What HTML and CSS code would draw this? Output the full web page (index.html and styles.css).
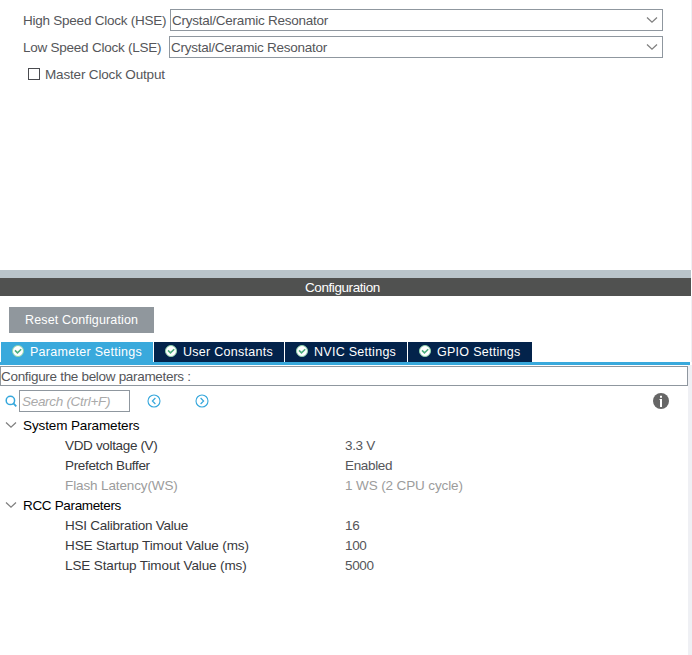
FILE: index.html
```html
<!DOCTYPE html>
<html lang="en">
<head>
<meta charset="utf-8">
<title>RCC Mode and Configuration</title>
<link rel="stylesheet" href="styles.css">
</head>
<body>
<svg class="defs" width="0" height="0">
  <symbol id="chevron" viewBox="0 0 12 8"><path d="M1 1.500 6 6.200 11 1.500" fill="none" stroke="#808080" stroke-width="1.300"/></symbol>
  <symbol id="check" viewBox="0 0 12 12"><circle cx="6" cy="6" r="5.500" fill="#fff" stroke="#8fd3ac" stroke-width="1"/><path d="M3 5.400 5.500 7.900 9.200 4.300" fill="none" stroke="#4caf7c" stroke-width="1.600"/></symbol>
</svg>
<section class="mode">
  <div class="field"><span class="label">High Speed Clock (HSE)</span><div class="select">Crystal/Ceramic Resonator<svg class="chev"><use href="#chevron"/></svg></div></div>
  <div class="field low"><span class="label">Low Speed Clock (LSE)</span><div class="select">Crystal/Ceramic Resonator<svg class="chev"><use href="#chevron"/></svg></div></div>
  <div class="option"><span class="box"></span>Master Clock Output</div>
</section>
<div class="splitter"></div>
<header class="title">Configuration</header>
<section class="tools">
  <div class="reset">Reset Configuration</div>
  <nav class="tabs">
    <div class="tab active"><svg class="ok"><use href="#check"/></svg>Parameter Settings</div>
    <div class="tab constants"><svg class="ok"><use href="#check"/></svg>User Constants</div>
    <div class="tab nvic"><svg class="ok"><use href="#check"/></svg>NVIC Settings</div>
    <div class="tab gpio"><svg class="ok"><use href="#check"/></svg>GPIO Settings</div>
  </nav>
</section>
<div class="line"></div>
<main class="panel">
  <div class="hint">Configure the below parameters :</div>
  <div class="searchbar">
    <svg class="magnifier" viewBox="0 0 12 12"><circle cx="5.400" cy="5.400" r="4.200" fill="none" stroke="#35a7dc" stroke-width="1.500"/><path d="M8.200 8.200 11.300 11.300" stroke="#35a7dc" stroke-width="1.800"/></svg>
    <div class="search">Search (Ctrl+F)</div>
    <svg class="nav prev" viewBox="0 0 14 14"><circle cx="7" cy="7" r="6" fill="none" stroke="#35a7dc" stroke-width="1.100"/><path d="M8.400 4 5.400 7 8.400 10" fill="none" stroke="#35a7dc" stroke-width="1.200"/></svg>
    <svg class="nav next" viewBox="0 0 14 14"><circle cx="7" cy="7" r="6" fill="none" stroke="#35a7dc" stroke-width="1.100"/><path d="M5.600 4 8.600 7 5.600 10" fill="none" stroke="#35a7dc" stroke-width="1.200"/></svg>
    <svg class="info" viewBox="0 0 16 16"><circle cx="8" cy="8" r="8" fill="#666"/><path d="M7 2.700h2v2H7zM6.500 6H9v8H7V7H6.500z" fill="#fff"/></svg>
  </div>
  <div class="tree">
    <div class="group wide"><svg class="chev"><use href="#chevron"/></svg>System Parameters</div>
    <div class="row narrow"><span>VDD voltage (V)</span><span class="value">3.3 V</span></div>
    <div class="row narrow"><span>Prefetch Buffer</span><span class="value">Enabled</span></div>
    <div class="row wide disabled"><span>Flash Latency(WS)</span><span class="value">1 WS (2 CPU cycle)</span></div>
    <div class="group narrow"><svg class="chev"><use href="#chevron"/></svg>RCC Parameters</div>
    <div class="row"><span>HSI Calibration Value</span><span class="value narrow">16</span></div>
    <div class="row wide"><span>HSE Startup Timout Value (ms)</span><span class="value narrow">100</span></div>
    <div class="row wide"><span>LSE Startup Timout Value (ms)</span><span class="value narrow">5000</span></div>
  </div>
</main>
</body>
</html>
```
FILE: styles.css
```css
* { box-sizing: border-box; }
body {
  margin: 0;
  height: 655px;
  display: flex;
  flex-direction: column;
  overflow: hidden;
  background: #fff;
  color: #55565a;
  font: 13.5px/20px "Liberation Sans", Arial, sans-serif;
  letter-spacing: -.24px;
  white-space: nowrap;
}
svg { display: block; flex: none; }
.defs { position: absolute; }
.wide { letter-spacing: -.12px; }
.narrow { letter-spacing: -.34px; }
.mode {
  height: 270px;
  padding: 9px 28px 0 23px;
  border-right: 1px solid #eff0f4;
}
.field { display: flex; height: 22px; margin-bottom: 5px; line-height: 23px; }
.label { width: 147px; }
.low .label { width: 146px; }
.select {
  flex: 1;
  display: flex;
  align-items: center;
  justify-content: space-between;
  border: 1px solid #8f979f;
  padding: 0 4px 0 1px;
}
.chev { width: 12px; height: 8px; }
.option {
  display: flex;
  align-items: center;
  height: 20px;
  margin: 6px 0 0 5px;
  line-height: 21px;
  letter-spacing: -.17px;
}
.box { width: 12px; height: 12px; border: 1px solid #4a4b4f; margin-right: 5px; }
.splitter { height: 8px; margin-right: 1px; background: #b9c4ca; }
.title {
  height: 18px;
  margin-right: 1px;
  padding-left: 305px;
  line-height: 19px;
  background: #505150;
  color: #fff;
  letter-spacing: -.42px;
}
.tools {
  height: 66px;
  padding-top: 11px;
  border-right: 1px solid #eff0f4;
  color: #fff;
  font-size: 12.5px;
  letter-spacing: .28px;
}
.reset {
  width: 145px;
  height: 26px;
  margin-left: 9px;
  padding-left: 16px;
  line-height: 27px;
  background: #90979d;
  letter-spacing: .14px;
}
.tabs { display: flex; gap: 1px; margin: 9px 0 0 1px; }
.tab {
  display: flex;
  align-items: center;
  height: 20px;
  padding-left: 11px;
  background: #03234b;
}
.ok { width: 12px; height: 12px; margin: -2px 6px 0 0; }
.active { width: 152px; background: #39a9dc; }
.constants { width: 130px; }
.nvic { width: 122px; }
.gpio { width: 124px; }
.line { height: 3px; margin-right: 2px; background: #39a9dc; }
.panel { flex: 1; padding-top: 1px; border-right: 4px solid #eff0f4; }
.hint { height: 20px; line-height: 20px; border: 1px solid #8f979f; letter-spacing: -.31px; }
.searchbar { display: flex; align-items: center; height: 29px; padding-left: 5px; }
.magnifier { width: 12px; height: 12px; }
.search {
  width: 111px;
  height: 22px;
  margin-left: 2px;
  padding-left: 2px;
  line-height: 21px;
  border: 1px solid #8f979f;
  color: #aaa;
  font-style: italic;
  letter-spacing: -.3px;
}
.nav { width: 14px; height: 14px; }
.prev { margin-left: 17px; }
.next { margin-left: 34px; }
.info { width: 16px; height: 16px; margin: 0 19px 0 auto; }
.group { display: flex; align-items: center; height: 20px; line-height: 21px; padding-left: 5px; color: #000; }
.group .chev { margin-right: 6px; }
.row { display: grid; grid-template-columns: 280px 1fr; height: 20px; line-height: 21px; padding-left: 65px; color: #37383c; }
.value { color: #55565a; }
.disabled, .disabled .value { color: #9c9c9c; }
```
